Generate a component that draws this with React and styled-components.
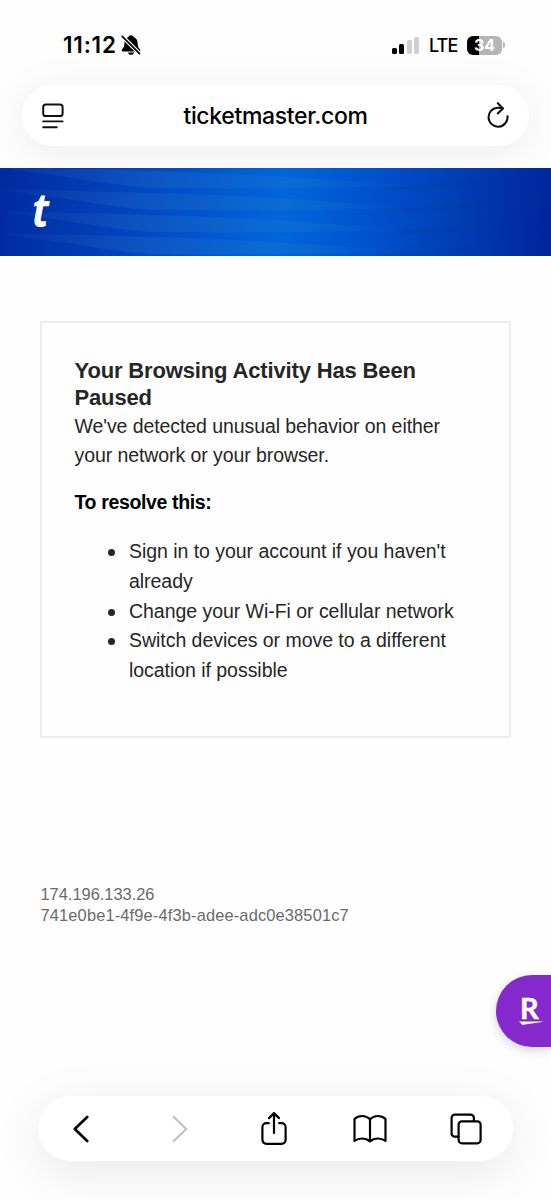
import React from 'react'
import styled, { createGlobalStyle } from 'styled-components';

const tips = [
    "Sign in to your account if you haven't already",
    'Change your Wi-Fi or cellular network',
    'Switch devices or move to a different location if possible',
];

const signalBars = [
    { height: 6, on: true },
    { height: 10, on: true },
    { height: 13.5, on: false },
    { height: 17, on: false },
];

const SilentIcon = () => (
    <svg width="20" height="22" viewBox="0 0 20 22">
        <path d="M10 1.2c-1.500 0-2.400.8-2.600 1.900C4.800 4 3.500 6.200 3.400 9c-.1 3.300-.6 4.700-2.300 6.200-.8.8-.5 2.200.8 2.200h16.200c1.300 0 1.600-1.400.8-2.200-1.700-1.500-2.200-2.900-2.300-6.200-.1-2.800-1.400-5-4-5.900-.2-1.100-1.100-1.900-2.600-1.900z" fill="#000" />
        <path d="M7 18.400h6c-.3 1.400-1.500 2.300-3 2.300s-2.700-.9-3-2.300z" fill="#000" />
        <path d="M.9 2 18.600 19.700" stroke="#fff" strokeWidth="4" />
        <path d="M1.200 2.300 18.500 19.600" stroke="#000" strokeWidth="1.700" strokeLinecap="round" />
    </svg>
);

const ReaderIcon = () => (
    <svg width="22" height="26" viewBox="0 0 22 26" fill="none" stroke="#111" strokeWidth="2" strokeLinecap="round">
        <rect x="1.200" y="1.400" width="19.400" height="11.600" rx="2.600" />
        <path d="M1.200 18.400h19.400M1.200 24.200h13.600" strokeWidth="1.900" />
    </svg>
);

const ReloadIcon = () => (
    <svg width="22" height="27" viewBox="0 0 22 27" fill="none" stroke="#111" strokeWidth="2.100" strokeLinecap="round" strokeLinejoin="round">
        <path d="M20.500 14.200A9.500 9.500 0 1 1 11 5.700c1.600 0 3.100.2 4.700.6" />
        <path d="m10.800 1.200 5.100 5.200-5.100 5" />
    </svg>
);

const BackIcon = () => (
    <svg width="16" height="28" viewBox="0 0 16 28" fill="none" stroke="currentColor" strokeWidth="2.700" strokeLinecap="round" strokeLinejoin="round">
        <path d="M14.200 2 1.800 14l12.400 12" />
    </svg>
);

const ForwardIcon = () => (
    <svg width="16" height="28" viewBox="0 0 16 28" fill="none" stroke="currentColor" strokeWidth="2.400" strokeLinecap="round" strokeLinejoin="round">
        <path d="m1.800 2 12.400 12-12.400 12" />
    </svg>
);

const ShareIcon = () => (
    <svg width="28" height="36" viewBox="0 0 28 36" fill="none" stroke="currentColor" strokeWidth="2.200" strokeLinecap="round" strokeLinejoin="round">
        <path d="M8.800 12.200H6.400a4 4 0 0 0-4 4v12.600a4 4 0 0 0 4 4h15.200a4 4 0 0 0 4-4V16.200a4 4 0 0 0-4-4h-2.400" />
        <path d="M14 22V2.300M9 7.100l5-5 5 5" />
    </svg>
);

const BookIcon = () => (
    <svg width="34" height="30" viewBox="0 0 34 30" fill="none" stroke="currentColor" strokeWidth="2.200" strokeLinecap="round" strokeLinejoin="round">
        <path d="M17 5.300C14.800 3.100 12.200 2 9.300 2S3.500 3 1.500 5v21.900c2.200-1.600 4.900-2.400 7.800-2.400s5.500 1 7.700 3c2.200-2 4.800-3 7.700-3s5.600.8 7.800 2.400V5c-2-2-4.900-3-7.800-3S19.200 3.100 17 5.300zV27.500" />
    </svg>
);

const TabsIcon = () => (
    <svg width="32" height="32" viewBox="0 0 32 32" fill="none" stroke="currentColor" strokeWidth="2.200" strokeLinecap="round" strokeLinejoin="round">
        <path d="M8.400 23.700H4.900a3.300 3.300 0 0 1-3.300-3.300V4.900a3.300 3.300 0 0 1 3.300-3.300h15.700a3.300 3.300 0 0 1 3.300 3.300v3.200" />
        <rect x="8.600" y="8.300" width="22" height="22" rx="3.300" />
    </svg>
);

const Waves = () => (
    <WaveSvg viewBox="0 0 551 88" preserveAspectRatio="none">
        <defs>
            <linearGradient id="light" gradientUnits="userSpaceOnUse" x1="0" y1="0" x2="410" y2="0">
                <stop offset="0" stopColor="#3a60b8" stopOpacity="0.1" />
                <stop offset="0.35" stopColor="#3478c0" stopOpacity="0.25" />
                <stop offset="0.75" stopColor="#2a80c8" stopOpacity="0.22" />
                <stop offset="1" stopColor="#2a80c8" stopOpacity="0" />
            </linearGradient>
            <linearGradient id="dark" gradientUnits="userSpaceOnUse" x1="375" y1="0" x2="551" y2="0">
                <stop offset="0" stopColor="#003a90" stopOpacity="0.25" />
                <stop offset="1" stopColor="#003090" stopOpacity="0" />
            </linearGradient>
        </defs>
        {[-22, 0, 22, 44, 66].map(y => (
            <g key={y}>
                <path d={`M0 ${y}C60 ${y} 110 ${y + 2} 150 ${y + 3}S240 ${y + 6} 290 ${y + 9}S370 ${y + 15} 410 ${y + 18}C330 ${y + 20} 250 ${y + 21} 150 ${y + 20}C110 ${y + 17} 60 ${y + 7} 0 ${y}Z`} fill="url(#light)" />
                <path d={`M378 ${y + 21}C430 ${y + 16} 490 ${y + 11} 551 ${y + 2}V${y + 12}C500 ${y + 20} 440 ${y + 22} 378 ${y + 21}Z`} fill="url(#dark)" />
            </g>
        ))}
    </WaveSvg>
);

const App = () => (
    <Screen>
        <GlobalStyle />
        <BrowserTop>
            <StatusBar>
                <Time>11:12</Time>
                <SilentIcon />
                <Signal>
                    {signalBars.map(bar => (
                        <SignalBar key={bar.height} $height={bar.height} $on={bar.on} />
                    ))}
                </Signal>
                <Network>LTE</Network>
                <Battery>34</Battery>
                <BatteryTip />
            </StatusBar>
            <AddressBar>
                <ReaderIcon />
                <Url>ticketmaster.com</Url>
                <ReloadIcon />
            </AddressBar>
        </BrowserTop>
        <Banner>
            <Waves />
            <Logo>t</Logo>
        </Banner>
        <Content>
            <Card>
                <Title>Your Browsing Activity Has Been Paused</Title>
                <Text>We've detected unusual behavior on either your network or your browser.</Text>
                <Subtitle>To resolve this:</Subtitle>
                <TipList>
                    {tips.map(tip => (
                        <Tip key={tip}>{tip}</Tip>
                    ))}
                </TipList>
            </Card>
            <RequestInfo>
                <IpAddress>174.196.133.26</IpAddress>
                <RequestId>741e0be1-4f9e-4f3b-adee-adc0e38501c7</RequestId>
            </RequestInfo>
        </Content>
        <RewardsButton>
            <RewardsLetter>R</RewardsLetter>
            <svg width="25" height="5" viewBox="0 0 25 5">
                <path d="M0 .4 25 .6C19 1.800 10 3 3.500 4z" fill="#fff" />
            </svg>
        </RewardsButton>
        <Toolbar>
            <ToolButton><BackIcon /></ToolButton>
            <ToolButton $disabled><ForwardIcon /></ToolButton>
            <ToolButton><ShareIcon /></ToolButton>
            <ToolButton><BookIcon /></ToolButton>
            <ToolButton><TabsIcon /></ToolButton>
        </Toolbar>
    </Screen>
)

const GlobalStyle = createGlobalStyle`
    body {
        margin: 0;
        background: #fefefe;
    }

    * {
        box-sizing: border-box;
    }

    svg {
        display: block;
        flex-shrink: 0;
    }
`;

const Screen = styled.div`
    position: relative;
    display: flex;
    flex-direction: column;
    width: 551px;
    height: 1200px;
    overflow: hidden;
    background: #fefefe;
    font-family: "Liberation Sans", Arial, sans-serif;
`;

const BrowserTop = styled.div`
    height: 168px;
    overflow: hidden;
`;

const StatusBar = styled.div`
    display: flex;
    align-items: center;
    height: 85px;
    padding: 5px 46px 0 63px;
`;

const Time = styled.div`
    width: 57.500px;
    font-family: Inter, sans-serif;
    font-size: 22.500px;
    font-weight: 600;
    letter-spacing: 0.8px;
    line-height: 26px;
    margin-top: -1px;
    white-space: nowrap;
`;

const Signal = styled.div`
    display: flex;
    align-items: flex-end;
    gap: 2.500px;
    height: 17px;
    margin-left: auto;
`;

const SignalBar = styled.div`
    width: 5px;
    height: ${props => props.$height}px;
    border-radius: 1.500px;
    background: ${props => props.$on ? '#000' : '#cfcfcf'};
`;

const Network = styled.div`
    width: 48px;
    padding-left: 10px;
    font-family: Inter, sans-serif;
    font-size: 18px;
    font-weight: 500;
    letter-spacing: -0.9px;
`;

const Battery = styled.div`
    width: 35px;
    height: 19px;
    border-radius: 6px;
    background: linear-gradient(90deg, #000 12px, #b5b5b5 12px);
    color: #fff;
    font-family: Inter, sans-serif;
    font-size: 16px;
    font-weight: 700;
    line-height: 19px;
    text-align: center;
`;

const BatteryTip = styled.div`
    width: 2px;
    height: 6px;
    margin-left: 1px;
    border-radius: 0 2px 2px 0;
    background: #b5b5b5;
`;

const AddressBar = styled.div`
    display: flex;
    align-items: center;
    justify-content: space-between;
    height: 61px;
    margin: 0 22px;
    padding: 0 20px;
    border-radius: 31px;
    background: #fff;
    box-shadow: 0 6px 44px rgba(0, 0, 0, 0.07);
`;

const Url = styled.div`
    font-family: Inter, sans-serif;
    font-size: 23px;
    font-weight: 500;
    letter-spacing: -0.340px;
`;

const Banner = styled.div`
    position: relative;
    height: 88px;
    padding: 13px 0 0 32px;
    background: linear-gradient(95deg, #002a9e 0%, #0046c0 25%, #0066da 51%, #0050cc 68%, #0038ac 87%, #00249a 100%);
`;

const WaveSvg = styled.svg`
    position: absolute;
    inset: 0;
    width: 100%;
    height: 100%;
`;

const Logo = styled.div`
    position: relative;
    width: 24px;
    color: #fff;
    font-family: "Open Sans", sans-serif;
    font-size: 47px;
    font-style: italic;
    font-weight: 700;
    line-height: 56px;
    transform: scaleX(0.88);
    transform-origin: left;
`;

const Content = styled.div`
    flex: 1;
    padding: 65px 40px 0;
`;

const Card = styled.div`
    height: 417px;
    padding: 34px 30px 0 32.500px;
    border: 2px solid #ededed;
`;

const Title = styled.h1`
    margin: 0;
    color: #262626;
    font-size: 22px;
    font-weight: 700;
    letter-spacing: -0.150px;
    line-height: 27.300px;
`;

const Text = styled.p`
    margin: 0;
    color: #262626;
    font-size: 19.500px;
    letter-spacing: -0.080px;
    line-height: 29.400px;
`;

const Subtitle = styled.h2`
    margin: 17.500px 0 0;
    color: #000;
    font-size: 19.500px;
    font-weight: 700;
    letter-spacing: -0.360px;
    line-height: 28px;
`;

const TipList = styled.ul`
    margin: 21px 0 0;
    padding: 0 0 0 33px;
    list-style: none;
`;

const Tip = styled.li`
    display: flex;
    gap: 14.500px;
    color: #262626;
    font-size: 19.500px;
    letter-spacing: -0.040px;
    line-height: 29.800px;

    &::before {
        content: "";
        flex: none;
        width: 7px;
        height: 7px;
        margin-top: 12px;
        border-radius: 50%;
        background: #262626;
    }
`;

const RequestInfo = styled.div`
    margin: 146px 0 0 0.500px;
    color: #6a6a6a;
    font-size: 16.400px;
    letter-spacing: 0.160px;
    line-height: 20.600px;
`;

const IpAddress = styled.div`
    letter-spacing: 0;
`;

const RequestId = styled.div``;

const RewardsButton = styled.div`
    position: absolute;
    top: 975px;
    right: 0;
    display: flex;
    flex-direction: column;
    width: 55px;
    height: 72px;
    padding: 17px 0 0 23px;
    border-radius: 36px 0 0 36px;
    background: #8529cd;
    box-shadow: 0 3px 10px rgba(40, 40, 100, 0.2);
`;

const RewardsLetter = styled.div`
    height: 29px;
    margin: -1px 0 1px;
    padding-left: 1px;
    color: #fff;
    font-family: Lato, sans-serif;
    font-size: 29px;
    font-weight: 700;
    line-height: 33px;
    -webkit-text-stroke: 0.500px #fff;
`;

const Toolbar = styled.nav`
    display: flex;
    align-items: center;
    justify-content: space-between;
    height: 65px;
    margin: 0 38px 39px;
    padding: 0 27px 0 23px;
    border-radius: 33px;
    background: #fff;
    box-shadow: 0 10px 50px rgba(0, 0, 0, 0.085);
`;

const ToolButton = styled.div`
    display: flex;
    justify-content: center;
    width: 40px;
    padding-left: ${props => props.$disabled ? 6 : 0}px;
    color: ${props => props.$disabled ? '#c4c4c4' : '#000'};
`;

export default App
